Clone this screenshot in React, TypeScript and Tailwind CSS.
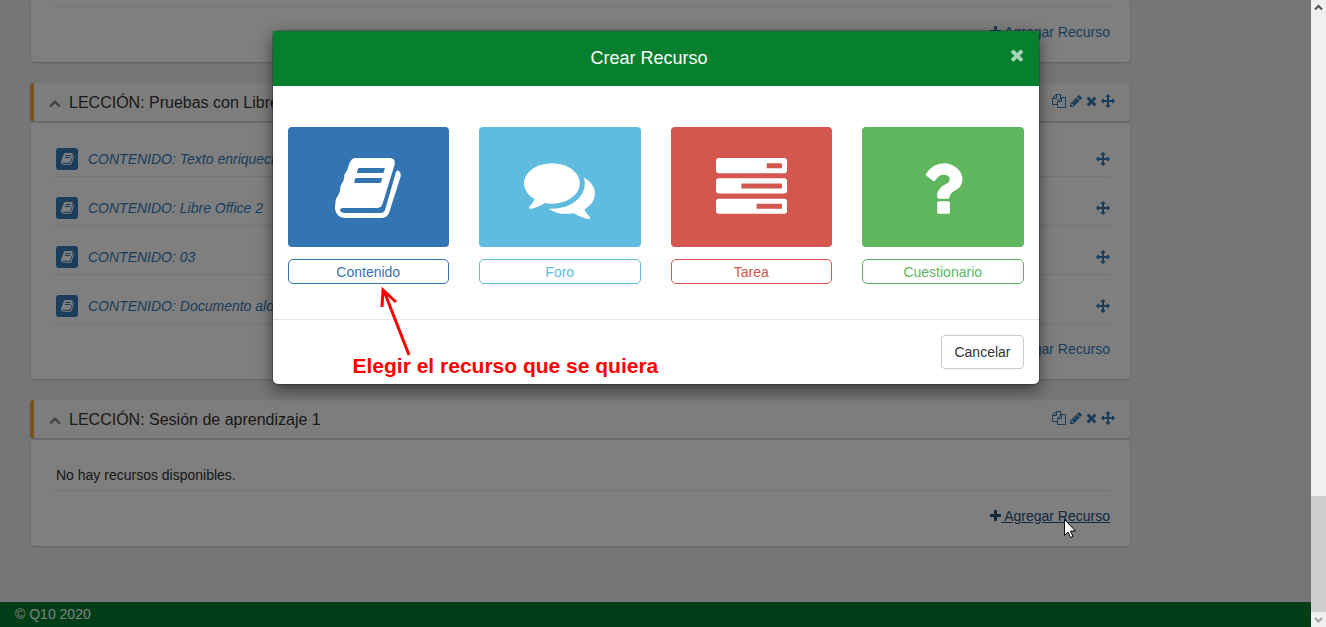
import type { ReactNode } from "react";

type IconDef = { box: string; d: string };

const ICONS: Record<string, IconDef> = {
  book: {
    box: "0 -5 66 71",
    d: "M20 0H55Q61 .5 59.500 7L47.500 46Q46.300 50 42 50H8Q5 50 5 52Q5.500 55 10 55H45Q49 55 50 52L61 14Q61.800 11.500 64 13Q66.500 15 65.500 19L54 55Q52 60 46 60H11Q1.500 60 0 51Q-.2 48 .5 45Q.3 42 1.500 40Q4.500 36 5.200 32Q5 29.500 6 27Q9 23 9.300 19Q9 17 10.300 15Q13 11.500 13.500 8Q13.500 6 15 4.500Q16.500 .300 20 0ZM24 10Q23.200 10 22.900 11L22 14Q21.800 15 22.700 15H47.500Q48.500 15 48.800 14L49.800 11Q50 10 49 10ZM21.300 20Q20.400 20 20.100 21L19.200 24Q19 25 20 25H44.800Q45.700 25 46 24L47 21Q47.200 20 46.200 20Z",
  },
  comments: {
    box: "0 0 1792 1792",
    d: "M1408 768q0 139-94 257t-256.5 186.5-353.5 68.5q-86 0-176-16-124 88-278 128-36 9-86 16h-3q-11 0-20.5-8t-11.5-21q-1-3-1-6.5t.5-6.5 2-6l2.5-5 3.5-5.5 4-5 4.5-5 4-4.5q5-6 23-25t26-29.5 22.5-29 25-38.5 20.5-44q-124-72-195-177t-71-224q0-139 94-257t256.5-186.5 353.5-68.5 353.5 68.5 256.5 186.5 94 257zm384 256q0 120-71 224.5t-195 176.5q10 24 20.5 44t25 38.5 22.5 29 26 29.5 23 25q1 1 4 4.5t4.5 5 4 5 3.5 5.5l2.5 5 2 6 .5 6.5-1 6.5q-3 14-13 22t-22 7q-50-7-86-16-154-40-278-128-90 16-176 16-271 0-472-132 58 4 88 4 161 0 309-45t264-129q125-92 192-212t67-254q0-77-23-152 129 71 204 178t75 230z",
  },
  tasks: {
    box: "0 0 1792 1792",
    d: "M1024 1408h640v-128h-640v128zm-384-512h1024v-128h-1024v128zm640-512h384v-128h-384v128zm512 832v256q0 26-19 45t-45 19h-1664q-26 0-45-19t-19-45v-256q0-26 19-45t45-19h1664q26 0 45 19t19 45zm0-512v256q0 26-19 45t-45 19h-1664q-26 0-45-19t-19-45v-256q0-26 19-45t45-19h1664q26 0 45 19t19 45zm0-512v256q0 26-19 45t-45 19h-1664q-26 0-45-19t-19-45v-256q0-26 19-45t45-19h1664q26 0 45 19t19 45z",
  },
  question: {
    box: "384 0 1024 1792",
    d: "M1088 1256v240q0 16-12 28t-28 12h-240q-16 0-28-12t-12-28v-240q0-16 12-28t28-12h240q16 0 28 12t12 28zm316-600q0 54-15.5 101t-35 76.5-55 59.5-57.5 43.5-61 35.5q-41 23-68.5 65t-27.5 67q0 17-12 32.5t-28 15.5h-240q-15 0-25.5-18.5t-10.5-37.5v-45q0-83 65-156.5t143-108.5q59-27 84-56t25-76q0-42-46.5-74t-107.5-32q-65 0-108 29-35 25-107 115-13 16-31 16-12 0-25-8l-164-125q-13-10-15.5-25t5.5-28q160-266 464-266 80 0 161 31t146 83 106 127.5 41 158.5z",
  },
  copy: {
    box: "0 0 1792 1792",
    d: "M1696 384q40 0 68 28t28 68v1216q0 40-28 68t-68 28h-960q-40 0-68-28t-28-68v-288h-544q-40 0-68-28t-28-68v-672q0-40 20-88t48-76l408-408q28-28 76-48t88-20h416q40 0 68 28t28 68v328q68-40 128-40h416zm-544 213l-299 299h299v-299zm-640-384l-299 299h299v-299zm196 647l316-316v-416h-384v416q0 40-28 68t-68 28h-416v640h512v-256q0-40 20-88t48-76zm956 804v-1152h-384v416q0 40-28 68t-68 28h-416v640h896z",
  },
  pencil: {
    box: "128 0 1536 1792",
    d: "M491 1536l91-91-235-235-91 91v107h128v128h107zm523-928q0-22-22-22-10 0-17 7l-542 542q-7 7-7 17 0 22 22 22 10 0 17-7l542-542q7-7 7-17zm-54-192l416 416-832 832h-416v-416zm683 96q0 53-37 90l-166 166-416-416 166-165q36-38 90-38 53 0 91 38l235 234q37 39 37 91z",
  },
  times: {
    box: "192 0 1408 1792",
    d: "M1490 1322q0 40-28 68l-136 136q-28 28-68 28t-68-28l-294-294-294 294q-28 28-68 28t-68-28l-136-136q-28-28-28-68t28-68l294-294-294-294q-28-28-28-68t28-68l136-136q28-28 68-28t68 28l294 294 294-294q28-28 68-28t68 28l136 136q28 28 28 68t-28 68l-294 294 294 294q28 28 28 68z",
  },
  arrows: {
    box: "0 0 1792 1792",
    d: "M1792 896q0 26-19 45l-256 256q-19 19-45 19t-45-19-19-45v-128h-384v384h128q26 0 45 19t19 45-19 45l-256 256q-19 19-45 19t-45-19l-256-256q-19-19-19-45t19-45 45-19h128v-384h-384v128q0 26-19 45t-45 19-45-19l-256-256q-19-19-19-45t19-45l256-256q19-19 45-19t45 19 19 45v128h384v-384h-128q-26 0-45-19t-19-45 19-45l256-256q19-19 45-19t45 19l256 256q19 19 19 45t-19 45-45 19h-128v384h384v-128q0-26 19-45t45-19 45 19l256 256q19 19 19 45z",
  },
  plus: {
    box: "192 0 1408 1792",
    d: "M1600 736v192q0 40-28 68t-68 28h-416v416q0 40-28 68t-68 28h-192q-40 0-68-28t-28-68v-416h-416q-40 0-68-28t-28-68v-192q0-40 28-68t68-28h416v-416q0-40 28-68t68-28h192q40 0 68 28t28 68v416h416q40 0 68 28t28 68z",
  },
  chevronUp: {
    box: "0 0 1792 1792",
    d: "M1683 1331l-166 165q-19 19-45 19t-45-19l-531-531-531 531q-19 19-45 19t-45-19l-166-165q-19-19-19-45.5t19-45.5l742-741q19-19 45-19t45 19l742 741q19 19 19 45.5t-19 45.5z",
  },
};

function Icon({ name, className = "h-3.5" }: { name: string; className?: string }) {
  const icon = ICONS[name];
  return (
    <svg viewBox={icon.box} className={`w-auto shrink-0 ${className}`} fill="currentColor" fillRule="evenodd" aria-hidden="true">
      <path d={icon.d} />
    </svg>
  );
}

function AddResource({ active = false }: { active?: boolean }) {
  return (
    <div className="flex justify-end pt-[15px] pb-5">
      <a
        href="#agregar"
        className={`flex items-center leading-5 ${active ? "text-[#23527c] underline" : "text-[#337ab7]"}`}
      >
        <Icon name="plus" />
        <span className="whitespace-pre"> Agregar Recurso</span>
      </a>
    </div>
  );
}

function Body({ children, active }: { children?: ReactNode; active?: boolean }) {
  return (
    <div className="rounded-[3px] bg-white pt-[5px] pr-5 pl-[21px] shadow-[0_1px_2px_rgba(0,0,0,0.2)]">
      {children}
      <AddResource active={active} />
    </div>
  );
}

function Lesson({ title, children, active }: { title: string; children: ReactNode; active?: boolean }) {
  return (
    <section className="mt-[21px]">
      <header className="-ml-px flex h-[38px] items-center justify-between rounded-[3px] border-l-4 border-[#f3a632] bg-[#fbfbfb] px-[15px] shadow-[0_1px_2px_rgba(0,0,0,0.2)]">
        <h2 className="flex items-center gap-2 pt-0.5 text-base text-[#333]">
          <button type="button" aria-label="Contraer" className="text-[#8a8a8a]">
            <Icon name="chevronUp" className="h-3" />
          </button>
          {title}
        </h2>
        <div className="flex items-center gap-1 pb-0.5 text-[#337ab7]">
          <button type="button" aria-label="Duplicar"><Icon name="copy" /></button>
          <button type="button" aria-label="Editar"><Icon name="pencil" /></button>
          <button type="button" aria-label="Eliminar"><Icon name="times" /></button>
          <button type="button" aria-label="Mover"><Icon name="arrows" /></button>
        </div>
      </header>
      <div className="pt-0.5">
        <Body active={active}>{children}</Body>
      </div>
    </section>
  );
}

function ContentRow({ name }: { name: string }) {
  return (
    <li className="flex items-center justify-between border-b border-[#ebebeb] pt-5 pb-1.5 pl-1">
      <a href="#contenido" className="flex items-center gap-2.5 text-[#337ab7] italic">
        <span className="flex size-[22px] items-center justify-center rounded-[3px] bg-[#337ab7] text-white">
          <Icon name="book" />
        </span>
        CONTENIDO: {name}
      </a>
      <button type="button" aria-label="Mover" className="text-[#337ab7]">
        <Icon name="arrows" />
      </button>
    </li>
  );
}

const CONTENTS = ["Texto enriquecido", "Libre Office 2", "03", "Documento alojado"];

const RESOURCES = [
  { label: "Contenido", icon: "book", tile: "bg-[#3374b3]", outline: "border-[#3374b3] text-[#3374b3]" },
  { label: "Foro", icon: "comments", tile: "bg-[#5fbcde]", outline: "border-[#5fbcde] text-[#5fbcde]" },
  { label: "Tarea", icon: "tasks", tile: "bg-[#d3564f]", outline: "border-[#d3564f] text-[#d3564f]" },
  { label: "Cuestionario", icon: "question", tile: "bg-[#5fb65d]", outline: "border-[#5fb65d] text-[#5fb65d]" },
];

function CreateDialog() {
  return (
    <div
      role="dialog"
      aria-modal="true"
      aria-labelledby="dialog-title"
      className="relative w-full max-w-[768px] rounded-md border border-black/20 bg-white bg-clip-padding shadow-[0_5px_15px_rgba(0,0,0,0.5)]"
    >
      <header className="flex h-[55px] items-start bg-[#06802e] pt-[15px] pr-3.5 pl-[15px] text-white">
        <h1 id="dialog-title" className="flex-1 text-center text-lg leading-6">Crear Recurso</h1>
        <button type="button" aria-label="Cerrar" className="text-white/65">
          <Icon name="times" className="h-[18px]" />
        </button>
      </header>
      <div className="grid grid-cols-4 gap-[30px] border-b border-[#e5e5e5] px-[15px] pt-[41px] pb-[35px]">
        {RESOURCES.map((r) => (
          <div key={r.label} className="flex flex-col gap-3">
            <button
              type="button"
              aria-label={r.label}
              className={`flex h-[120px] items-center justify-center rounded-[4px] pt-0.5 text-white ${r.tile}`}
            >
              <Icon name={r.icon} className="h-[71px]" />
            </button>
            <button type="button" className={`h-[25px] rounded-[5px] border leading-5 ${r.outline}`}>
              {r.label}
            </button>
          </div>
        ))}
      </div>
      <footer className="flex justify-end p-[15px]">
        <button type="button" className="h-[34px] rounded border border-[#ccc] px-3 text-[#333]">
          Cancelar
        </button>
      </footer>
      <svg
        viewBox="0 0 34 70"
        className="absolute top-[255px] left-[106px] h-[70px] w-[34px]"
        fill="none"
        stroke="#f00"
        strokeWidth="3"
        aria-hidden="true"
      >
        <path d="M30 69L5 5M3 21L4 4L17 16" />
      </svg>
      <p className="absolute top-[323px] left-20 text-[21px] leading-6 font-bold whitespace-nowrap text-[#f00]">
        Elegir el recurso que se quiera
      </p>
    </div>
  );
}

function ScrollTrack() {
  return (
    <div className="flex w-[15px] shrink-0 flex-col bg-[#f0f0f0]" aria-hidden="true">
      <svg viewBox="0 0 15 15" className="size-[15px]" fill="none" stroke="#505050" strokeWidth="2">
        <path d="M4 9.500L7.500 6L11 9.500" />
      </svg>
      <div className="flex flex-1 flex-col justify-end">
        <div className="h-[19.5%] bg-[#cdcdcd]" />
      </div>
      <svg viewBox="0 0 15 15" className="size-[15px]" fill="none" stroke="#a3a3a3" strokeWidth="2">
        <path d="M4 6L7.500 9.500L11 6" />
      </svg>
    </div>
  );
}

export default function App() {
  return (
    <div className="flex h-screen overflow-hidden font-['Liberation_Sans',Arial,sans-serif] text-sm text-[#333]">
      <div className="relative flex min-w-0 flex-1 flex-col bg-[#ececf1]">
        <main className="w-full max-w-[1130px] flex-1 pl-[31px]">
          <Body>
            <div className="border-b border-[#ebebeb] pt-px" />
          </Body>
          <Lesson title="LECCIÓN: Pruebas con Libre Office">
            <ul>
              {CONTENTS.map((name) => (
                <ContentRow key={name} name={name} />
              ))}
            </ul>
          </Lesson>
          <Lesson title="LECCIÓN: Sesión de aprendizaje 1" active>
            <p className="border-b border-[#ebebeb] pt-5 pb-[5px] pl-1 leading-5">No hay recursos disponibles.</p>
          </Lesson>
        </main>
        <footer className="h-[25px] bg-[#007c2e] px-[15px] leading-[25px] text-white">© Q10 2020</footer>
        <div className="absolute inset-0 flex items-start justify-center bg-black/50 pt-[30px]">
          <CreateDialog />
        </div>
        <svg viewBox="0 0 12 19" className="absolute top-[519px] left-[1064px] h-[19px] w-3" aria-hidden="true">
          <path
            d="M.5.500V16.500L4 13L6.500 18.500L9 17.500L6.500 12H11.500Z"
            fill="#fff"
            stroke="#000"
            strokeWidth="1"
          />
        </svg>
      </div>
      <ScrollTrack />
    </div>
  );
}
